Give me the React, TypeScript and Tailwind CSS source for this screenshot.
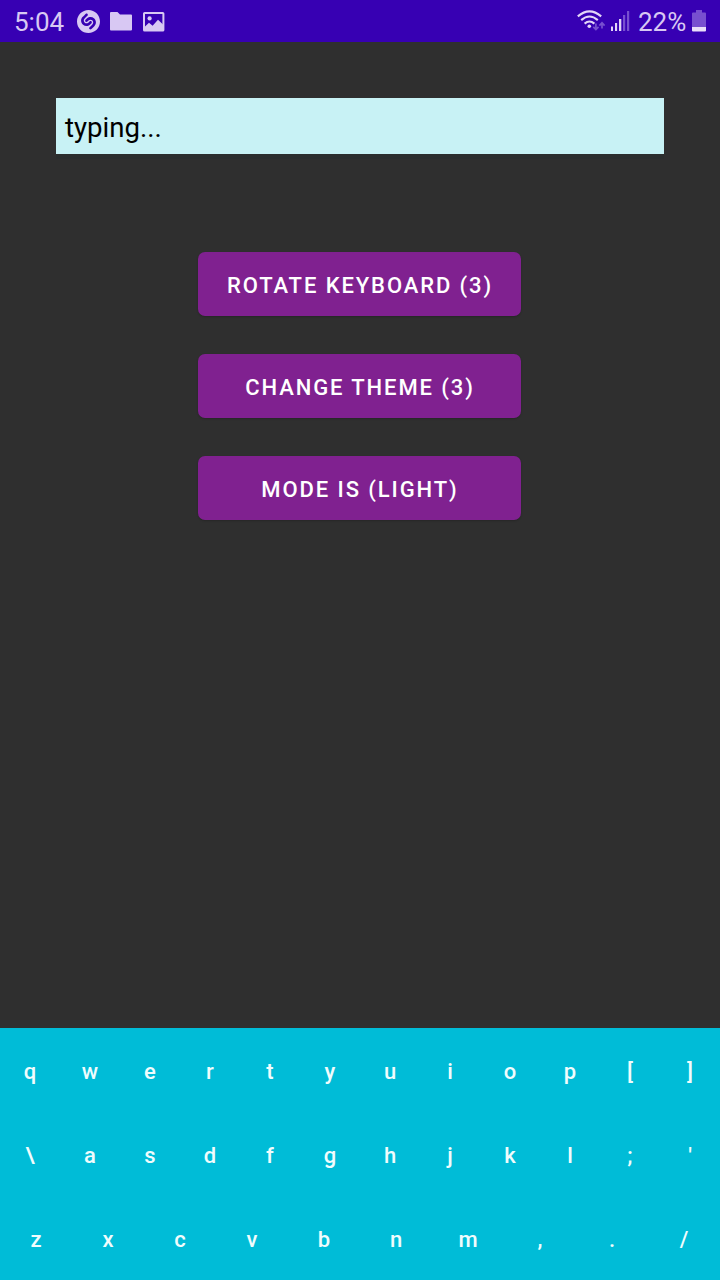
import React from "react";
import { SiShazam } from "react-icons/si";

const topRow = ["q", "w", "e", "r", "t", "y", "u", "i", "o", "p", "[", "]"];
const homeRow = ["\\", "a", "s", "d", "f", "g", "h", "j", "k", "l", ";", "'"];
const bottomRow = ["z", "x", "c", "v", "b", "n", "m", ",", ".", "/"];
const actions = ["ROTATE KEYBOARD (3)", "CHANGE THEME (3)", "MODE IS (LIGHT)"];

function FolderIcon() {
  return (
    <svg width="22" height="19" viewBox="0 0 22 19" fill="#d8c8f3">
      <path d="M0 1Q0 0 1 0H7.5L10 2.6H21Q22 2.6 22 3.6V17.5Q22 18.5 21 18.5H1Q0 18.5 0 17.5Z" />
    </svg>
  );
}

function PictureIcon() {
  return (
    <svg width="22" height="20" viewBox="0 0 22 20">
      <rect x="1" y="1" width="19.4" height="17.6" rx="0.6" fill="none" stroke="#d8c8f3" strokeWidth="2" />
      <circle cx="6.6" cy="6.4" r="2.1" fill="#d8c8f3" />
      <path d="M2 14.5 L6 10.8 L9.6 13.8 L15 7.8 L20 12.4 V18.5 H2Z" fill="#d8c8f3" />
    </svg>
  );
}

function WifiIcon() {
  return (
    <svg width="30" height="22" viewBox="0 0 30 22" fill="none">
      <g stroke="#e3d6f8" strokeWidth="2.1">
        <path d="M0.8 6.4 Q12.5 -3.8 24.2 6.4" />
        <path d="M4.2 10.1 Q12.5 2.9 20.8 10.1" />
        <path d="M7.6 13.6 Q12.5 9.4 17.4 13.6" />
      </g>
      <circle cx="12.3" cy="16.2" r="1.8" fill="#e3d6f8" />
      <g stroke="#7850cf" strokeWidth="1.7">
        <path d="M18.9 13.5 V19.2 M16.3 16.8 L18.9 19.6 L21.5 16.8" />
        <path d="M25 18.6 V13 M22.4 15.6 L25 12.8 L27.6 15.6" />
      </g>
    </svg>
  );
}

function SignalIcon() {
  return (
    <svg width="19" height="21" viewBox="0 0 19 21">
      <g fill="#e3d6f8">
        <rect x="0" y="15.5" width="2" height="4.5" />
        <rect x="4" y="12" width="2.1" height="8" />
        <rect x="8" y="8" width="2.3" height="12" />
      </g>
      <g fill="#7850cf">
        <rect x="12" y="4" width="2.2" height="16" />
        <rect x="16" y="0" width="2.2" height="20" />
      </g>
    </svg>
  );
}

function BatteryIcon() {
  return (
    <svg width="14" height="22" viewBox="0 0 14 22">
      <path d="M4 0H10V2.5H13Q14 2.5 14 3.5V17H0V3.5Q0 2.5 1 2.5H4Z" fill="#7850cf" />
      <path d="M0 17H14V20.5Q14 21.5 13 21.5H1Q0 21.5 0 20.5Z" fill="#eadff9" />
    </svg>
  );
}

function KeyRow({ keys }: { keys: string[] }) {
  return (
    <div className="flex h-[84px]">
      {keys.map((key) => (
        <button
          key={key}
          className="flex min-w-0 flex-1 items-center justify-center pt-[3px] text-[22px] leading-none font-medium"
        >
          {key}
        </button>
      ))}
    </div>
  );
}

export default function App() {
  return (
    <div className="flex h-[1280px] w-[720px] flex-col overflow-hidden bg-[#2f2f2f] font-['Roboto',sans-serif]">
      <header className="flex h-[42px] shrink-0 items-center justify-between bg-[#3700b3] pr-[14px] pl-[14px] text-[#d8c8f3]">
        <div className="flex items-center">
          <span className="w-[63px] pt-[2px] text-[26px] leading-none">5:04</span>
          <SiShazam size={23} color="#d8c8f3" />
          <div className="ml-[10px]"><FolderIcon /></div>
          <div className="ml-[11px] pt-px"><PictureIcon /></div>
        </div>
        <div className="flex items-center">
          <WifiIcon />
          <div className="ml-[4px]"><SignalIcon /></div>
          <span className="ml-[8px] w-[50px] pt-[2px] text-[26px] leading-none">22%</span>
          <div className="ml-[4px]"><BatteryIcon /></div>
        </div>
      </header>

      <main className="flex flex-1 flex-col items-center pt-[56px]">
        <div className="flex h-[56px] w-[608px] items-center bg-[#c8f2f5] pt-[3px] pl-[9px] text-[27.6px] leading-none text-black shadow-[0_5px_0_#2b2e2e]">
          typing...
        </div>
        <div className="mt-[98px] mr-px flex w-[323px] flex-col gap-[38px]">
          {actions.map((label) => (
            <button
              key={label}
              className="flex h-16 items-center justify-center rounded-[7px] bg-[#802190] pt-[3px] pl-px text-[22px] leading-none font-medium tracking-[1.9px] whitespace-nowrap text-white shadow-[0_1px_2px_rgba(0,0,0,0.2)]"
            >
              {label}
            </button>
          ))}
        </div>
      </main>

      <section className="h-[252px] shrink-0 bg-[#00bcd7] text-[#f0fcfd]">
        <KeyRow keys={topRow} />
        <KeyRow keys={homeRow} />
        <KeyRow keys={bottomRow} />
      </section>
    </div>
  );
}
